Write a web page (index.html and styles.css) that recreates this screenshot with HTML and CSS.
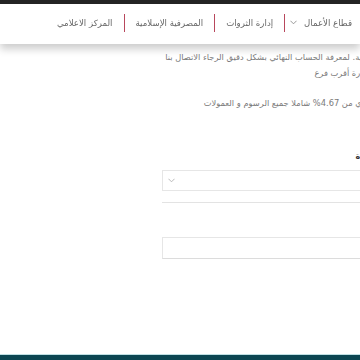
FILE: index.html
```html
<!DOCTYPE html>
<html lang="ar" dir="rtl">
<head>
    <meta charset="UTF-8">
    <meta name="viewport" content="width=device-width, initial-scale=1.0">
    <title>حاسبة التمويل</title>
    <link rel="stylesheet" href="styles.css">
</head>
<body>
    <header class="site-header">
        <div class="top-strip"></div>
        <nav class="main-nav">
            <a href="#" class="nav-link"><span>قطاع الأعمال</span><svg class="nav-chevron" viewBox="0 0 8 5" width="7" height="5"><path d="M0.5 0.5 L4 4 L7.5 0.5" fill="none" stroke="#8a8a8a" stroke-width="1"/></svg></a>
            <span class="nav-sep"></span>
            <a href="#" class="nav-link"><span>إدارة الثروات</span></a>
            <span class="nav-sep"></span>
            <a href="#" class="nav-link"><span>المصرفية الإسلامية</span></a>
            <span class="nav-sep"></span>
            <a href="#" class="nav-link"><span>المركز الاعلامي</span></a>
        </nav>
    </header>
    <main class="content">
        <p class="note">تقريبية. لمعرفة الحساب النهائي بشكل دقيق الرجاء الاتصال بنا<br>او زيارة أقرب فرع</p>
        <p class="rate">يساوي من 4.67% شاملا جميع الرسوم و العمولات</p>
        <form class="calc">
            <label class="calc-label">المدة</label>
            <div class="calc-select">
                <svg class="select-chevron" viewBox="0 0 8 5" width="7" height="5"><path d="M0.5 0.5 L4 4 L7.5 0.5" fill="none" stroke="#b0b0b0" stroke-width="1"/></svg>
            </div>
            <div class="calc-rule"></div>
            <div class="calc-input"></div>
        </form>
    </main>
    <footer class="site-footer"></footer>
</body>
</html>
```

FILE: styles.css
```css
* {
    margin: 0;
    padding: 0;
    box-sizing: border-box;
}
html, body {
    height: 100%;
}
body {
    font-family: "DejaVu Sans", sans-serif;
    background-color: #ffffff;
    color: #777777;
    overflow: hidden;
    padding-top: 49px;
    position: relative;
}
.site-header {
    position: fixed;
    top: 0;
    left: 0;
    width: 100%;
    z-index: 10;
    background-color: #ffffff;
    box-shadow: 0 5px 8px rgba(0, 0, 0, 0.2);
}
.top-strip {
    height: 4px;
    background-color: #242424;
}
.main-nav {
    display: flex;
    align-items: center;
    height: 40px;
    padding-right: 8px;
    padding-bottom: 3px;
}
.nav-link {
    display: flex;
    align-items: center;
    gap: 7px;
    color: #666666;
    font-size: 8.6px;
    text-decoration: none;
    padding: 0 11px;
    white-space: nowrap;
}
.nav-link:first-child {
    padding-right: 0;
    padding-left: 5px;
}
.nav-sep {
    width: 1px;
    height: 18px;
    background-color: #b8475c;
}
.content {
    width: 216px;
    margin-right: -18px;
}
.note,
.rate {
    font-size: 8.3px;
    line-height: 16px;
    color: #7a7a7a;
    white-space: nowrap;
}
.rate {
    margin-top: 14px;
}
.calc {
    margin-top: 39px;
}
.calc-label {
    display: block;
    font-size: 8px;
    font-weight: bold;
    color: #333333;
    line-height: 14px;
    margin-right: 2px;
}
.calc-select {
    margin-top: 6px;
    height: 21px;
    border: 1px solid #e6e6e6;
    display: flex;
    align-items: center;
    justify-content: flex-end;
    padding-left: 5px;
}
.calc-rule {
    margin-top: 11px;
    height: 1px;
    background-color: #e3e3e3;
}
.calc-input {
    margin-top: 34px;
    height: 22px;
    border: 1px solid #e6e6e6;
    border-bottom-color: #dcdcdc;
}
.site-footer {
    position: absolute;
    bottom: 0;
    left: 0;
    width: 100%;
    height: 6px;
    background-color: #0c4652;
    border-top: 1px solid #bfe0e3;
}
```
